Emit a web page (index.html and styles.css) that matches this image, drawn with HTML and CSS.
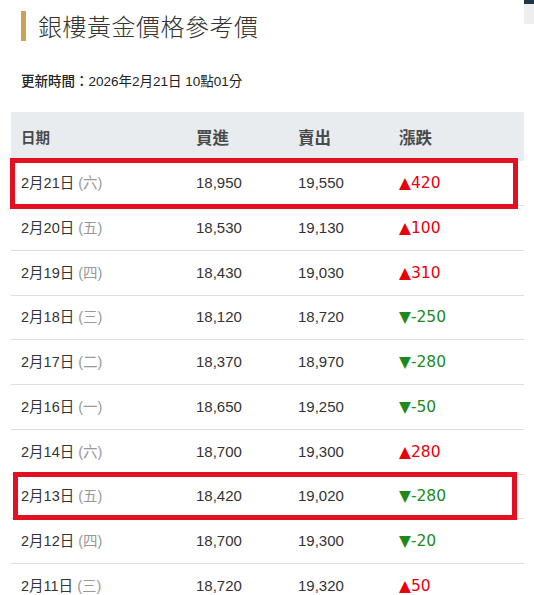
FILE: index.html
```html
<!DOCTYPE html>
<html lang="zh-Hant">
<head>
<meta charset="utf-8">
<title>銀樓黃金價格參考價</title>
<link rel="stylesheet" href="styles.css">
</head>
<body>
<div class="corner"><span class="corner-top"></span><span class="corner-bottom"></span></div>
<main class="page">
  <h1 class="title">銀樓黃金價格參考價</h1>
  <p class="updated"><span class="label">更新時間：</span>2026年2月21日 10點01分</p>
  <div class="table">
    <div class="row head">
      <div class="c date">日期</div><div class="c buy">買進</div><div class="c sell">賣出</div><div class="c chg">漲跌</div>
    </div>
    <div class="row first mark-a">
      <div class="c date">2月21日 <span class="wd">(六)</span></div><div class="c buy">18,950</div><div class="c sell">19,550</div><div class="c chg up">▲420</div>
    </div>
    <div class="row">
      <div class="c date">2月20日 <span class="wd">(五)</span></div><div class="c buy">18,530</div><div class="c sell">19,130</div><div class="c chg up">▲100</div>
    </div>
    <div class="row">
      <div class="c date">2月19日 <span class="wd">(四)</span></div><div class="c buy">18,430</div><div class="c sell">19,030</div><div class="c chg up">▲310</div>
    </div>
    <div class="row">
      <div class="c date">2月18日 <span class="wd">(三)</span></div><div class="c buy">18,120</div><div class="c sell">18,720</div><div class="c chg down">▼-250</div>
    </div>
    <div class="row">
      <div class="c date">2月17日 <span class="wd">(二)</span></div><div class="c buy">18,370</div><div class="c sell">18,970</div><div class="c chg down">▼-280</div>
    </div>
    <div class="row">
      <div class="c date">2月16日 <span class="wd">(一)</span></div><div class="c buy">18,650</div><div class="c sell">19,250</div><div class="c chg down">▼-50</div>
    </div>
    <div class="row">
      <div class="c date">2月14日 <span class="wd">(六)</span></div><div class="c buy">18,700</div><div class="c sell">19,300</div><div class="c chg up">▲280</div>
    </div>
    <div class="row mark-b">
      <div class="c date">2月13日 <span class="wd">(五)</span></div><div class="c buy">18,420</div><div class="c sell">19,020</div><div class="c chg down">▼-280</div>
    </div>
    <div class="row">
      <div class="c date">2月12日 <span class="wd">(四)</span></div><div class="c buy">18,700</div><div class="c sell">19,300</div><div class="c chg down">▼-20</div>
    </div>
    <div class="row">
      <div class="c date">2月11日 <span class="wd">(三)</span></div><div class="c buy">18,720</div><div class="c sell">19,320</div><div class="c chg up">▲50</div>
    </div>
  </div>
</main>
</body>
</html>
```
FILE: styles.css
```css
html, body {
  margin: 0;
  padding: 0;
  background: #fff;
  overflow: hidden;
}
body {
  font-family: "Liberation Sans", "Noto Sans CJK TC", sans-serif;
  color: #333;
}
.corner {
  position: absolute;
  top: 0;
  right: 0;
  width: 10px;
  display: flex;
  flex-direction: column;
}
.corner-top {
  height: 4px;
  background: #1f3447;
}
.corner-bottom {
  height: 20px;
  background: #eeeeee;
}
.page {
  padding-top: 11px;
}
.title {
  margin: 0 0 0 21px;
  padding-left: 12px;
  border-left: 5px solid #c6a457;
  height: 30px;
  line-height: 30px;
  font-family: "Noto Sans CJK TC", sans-serif;
  font-weight: 300;
  font-size: 24px;
  letter-spacing: 0.5px;
  color: #333;
}
.updated {
  margin: 29px 0 0 21px;
  height: 20px;
  line-height: 20px;
  font-size: 13.5px;
  color: #222;
}
.label {
  font-family: "Noto Sans CJK TC", sans-serif;
  font-weight: 500;
}
.table {
  margin: 22px 0 0 11px;
  width: 513px;
}
.row {
  display: grid;
  grid-template-columns: 175px 102px 101px 135px;
  align-items: center;
  height: 44.75px;
  box-sizing: border-box;
  border-bottom: 1px solid #dedede;
  font-size: 15px;
  line-height: 20px;
  position: relative;
}
.row.head {
  height: 49px;
  background: #e9ecef;
  border-bottom: none;
  font-family: "Noto Sans CJK TC", sans-serif;
  font-weight: 700;
  font-size: 16.5px;
  color: #4a4a4a;
}
.row.head .chg {
  font-family: "Noto Sans CJK TC", sans-serif;
  font-size: 16.5px;
}
.row.first {
  height: 45px;
}
.c {
  padding-left: 10px;
  white-space: nowrap;
}
.date {
  font-size: 14.5px;
}
.wd {
  color: #999;
}
.chg {
  font-family: "DejaVu Sans", sans-serif;
  font-size: 15.5px;
}
.up {
  color: #e8000b;
}
.down {
  color: #1d8a1d;
}
.mark-a::after,
.mark-b::after {
  content: "";
  position: absolute;
  border: 5px solid #e3111f;
  pointer-events: none;
}
.mark-a::after {
  left: -1px;
  right: 6px;
  top: -3px;
  bottom: -4px;
}
.mark-b::after {
  left: 2px;
  right: 7px;
  top: -3px;
  bottom: -2px;
}
```
